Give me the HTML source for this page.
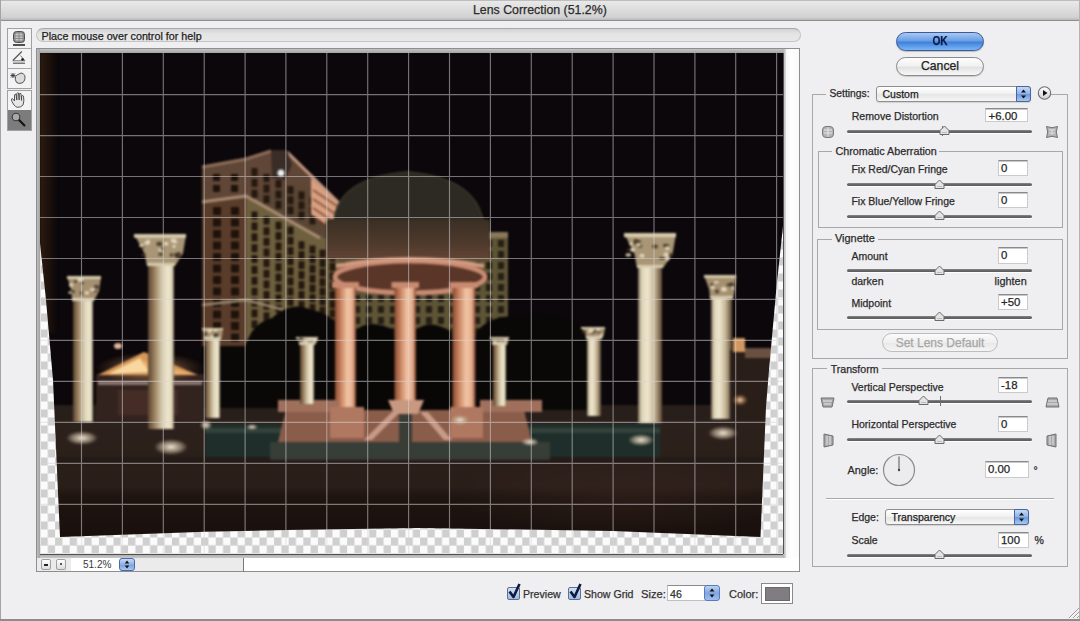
<!DOCTYPE html>
<html><head><meta charset="utf-8">
<style>
*{box-sizing:border-box}
html,body{margin:0;padding:0}
body{width:1080px;height:621px;overflow:hidden;position:relative;background:#efeef0;font-family:"Liberation Sans",sans-serif;color:#262626}
.a{position:absolute}
.t{position:absolute;white-space:nowrap;font-size:10.5px;line-height:12px;-webkit-text-stroke:0.25px currentColor}
#title{left:0;top:0;width:1080px;height:21px;background:linear-gradient(#e9e9e9,#dedede 40%,#d2d2d2 85%,#b9b9b9);border-top:1px solid #bdbdbd;border-bottom:1px solid #8e8e8e}
.grp{position:absolute;border:1px solid #a9a9ab;border-radius:1px}
.lab{position:absolute;background:#efeef0;padding:0 3px;font-size:10.5px;line-height:12px;white-space:nowrap}
.fld{position:absolute;background:#fff;border:1px solid #b8b8b8;border-top-color:#8c8c8c;box-shadow:inset 0 1px 1px rgba(0,0,0,.15);font-size:10.5px;line-height:14px;padding-left:3px}
.trk{position:absolute;height:4px;border-radius:2px;background:linear-gradient(#8a8a8a,#5c5c5c);box-shadow:0 1px 0 #fff}
.thumb{position:absolute;width:9px;height:9px}
</style></head><body>
<div id="title" class="a"></div>
<div class="t" style="left:473px;top:2.8px;font-size:12.35px;line-height:14px;color:#2a2a2a">Lens Correction (51.2%)</div>
<!-- left toolbar -->
<div class="a" style="left:7px;top:28px;width:25px;height:61px;border:1px solid #a0a0a0;background:#f3f3f3"></div>
<div class="a" style="left:8px;top:48px;width:23px;height:1px;background:#a8a8a8"></div>
<div class="a" style="left:8px;top:68px;width:23px;height:1px;background:#a8a8a8"></div>
<div class="a" style="left:7px;top:90px;width:25px;height:41px;border:1px solid #a0a0a0;background:#f3f3f3"></div>
<div class="a" style="left:8px;top:110px;width:23px;height:20px;background:#7c7c7c"></div>
<svg class="a" style="left:0;top:0" width="40" height="135" viewBox="0 0 40 135">
 <rect x="13.5" y="31.5" width="11" height="11" rx="3" fill="#8e8e8e" stroke="#505050"/>
 <rect x="15.5" y="33.5" width="7" height="7" rx="1.5" fill="#c8c8c8"/>
 <path d="M15 36h8M15 38.5h8M19 33v9" stroke="#7a7a7a" stroke-width="0.8"/>
 <rect x="13" y="44" width="12" height="2" fill="#505050"/>
 <path d="M12.8 60.5L21.8 51.5" stroke="#555" stroke-width="1.2"/>
 <path d="M12.8 60.8H25L20.5 55.5" fill="none" stroke="#666" stroke-width="0.9"/>
 <circle cx="22.5" cy="59.5" r="1.3" fill="#111"/>
 <rect x="13" y="62.5" width="12" height="1.5" fill="#7a7a7a"/>
 <path d="M16.5 82.5Q14.5 79 15.5 76.5Q17 74.5 19 74Q21 72.3 23 73.5Q25.5 75 25 78.5Q24.5 82 22 83Q19 84 16.5 82.5z" fill="#dcdcdc" stroke="#555" stroke-width="1"/>
 <path d="M10.5 75.5h5M13 73v5M11 73.5l4 4M15 73.5l-4 4" stroke="#333" stroke-width="0.9"/>
 <path d="M14 105Q11 101 11.5 99Q12.5 98 13.5 99.5L14.5 101V95Q15 93.8 16 94.2L16.8 100V93.5Q17.5 92.2 18.5 93L19.2 100V94Q20 92.8 21 93.6L21.6 100.5V96Q22.5 95 23.5 96Q24.5 101 23 105Q21 107.5 17.5 107.3Q15.5 107 14 105z" fill="#e6e6e6" stroke="#444" stroke-width="0.9"/>
 <circle cx="16" cy="117" r="3.8" fill="#a8a8a8" stroke="#3a3a3a" stroke-width="1.1"/>
 <path d="M18.8 119.8L25 126" stroke="#111" stroke-width="2"/>
</svg>
<!-- help bar -->
<div class="a" style="left:36px;top:28px;width:765px;height:14px;border-radius:7px;background:linear-gradient(#d2d2d2,#e4e4e4 40%,#e8e8e8);border:1px solid #c4c4c4;border-top-color:#a8a8a8"></div>
<div class="t" style="left:41.5px;top:30px;font-size:10.75px;line-height:12px;color:#1e1e1e">Place mouse over control for help</div>
<!-- preview frame -->
<div class="a" style="left:36px;top:48px;width:764px;height:524px;border:1px solid #8e8e8e;background:#fff"></div>
<div class="a" style="left:37px;top:49px;width:746px;height:4px;background:linear-gradient(#c4c4c4,#a4a4a4)"></div>
<div class="a" style="left:37px;top:49px;width:3px;height:509px;background:linear-gradient(90deg,#bdbdbd,#a2a2a2)"></div>
<div class="a" style="left:40px;top:554px;width:744px;height:4px;background:linear-gradient(#a8a8a8,#c8c8c8)"></div>
<div class="a" style="left:783px;top:49px;width:3px;height:509px;background:linear-gradient(90deg,#b0b0b0,#dcdcdc)"></div>
<div class="a" style="left:40px;top:553.5px;width:743px;height:1px;background:#505050"></div>
<div class="a" style="left:782.5px;top:53px;width:1px;height:501px;background:#505050"></div>
<div class="a" style="left:786px;top:49px;width:13px;height:509px;background:linear-gradient(90deg,#f4f4f4,#fff 40%,#fafafa)"></div>
<!-- zoom bar -->
<div class="a" style="left:37px;top:558px;width:206px;height:13px;background:#ebebeb"></div>
<div class="a" style="left:242.5px;top:558px;width:1px;height:14px;background:#7a7a7a"></div>
<div class="a" style="left:41px;top:559px;width:10px;height:11px;border:1px solid #a0a0a0;border-radius:2px;background:linear-gradient(#fff,#dcdcdc)"></div>
<div class="a" style="left:44px;top:564px;width:4px;height:1.6px;background:#222"></div>
<div class="a" style="left:56px;top:559px;width:10px;height:11px;border:1px solid #a0a0a0;border-radius:2px;background:linear-gradient(#fff,#dcdcdc)"></div>
<div class="a" style="left:60px;top:563px;width:2px;height:2px;border-radius:1px;background:#222"></div>
<div class="a" style="left:71px;top:558px;width:49px;height:13px;background:#fff"></div>
<div class="t" style="left:83px;top:559px;font-size:10px;line-height:12px;color:#3a3a3a;-webkit-text-stroke:0">51.2%</div>
<div class="a" style="left:119px;top:558px;width:16px;height:13px;border-radius:3px;border:1px solid #4a6aa5;background:linear-gradient(#c8dbf6,#8eb0e4 50%,#7aa2de 55%,#aac8f2)"></div>
<svg class="a" style="left:119px;top:558px" width="16" height="13"><path d="M5.8 5.5l2.2-3 2.2 3zM5.8 7.5l2.2 3 2.2-3z" fill="#111"/></svg>
<!-- bottom bar -->
<div class="a" style="left:507px;top:587px;width:13px;height:13px;border:1px solid #5f6f90;border-radius:2px;background:linear-gradient(#d4e0f4,#a0bce4)"></div>
<svg class="a" style="left:505px;top:580px" width="20" height="20"><path d="M4.5 11.5l4 5.5 6-13" fill="none" stroke="#0d1a40" stroke-width="2.6" stroke-linejoin="round"/></svg>
<div class="t" style="left:523px;top:588px;font-size:10.6px;color:#333">Preview</div>
<div class="a" style="left:568px;top:587px;width:13px;height:13px;border:1px solid #5f6f90;border-radius:2px;background:linear-gradient(#d4e0f4,#a0bce4)"></div>
<svg class="a" style="left:566px;top:580px" width="20" height="20"><path d="M4.5 11.5l4 5.5 6-13" fill="none" stroke="#0d1a40" stroke-width="2.6" stroke-linejoin="round"/></svg>
<div class="t" style="left:584px;top:588px;font-size:10.6px;color:#333">Show Grid</div>
<div class="t" style="left:641px;top:588px;font-size:11.2px;color:#333">Size:</div>
<div class="a" style="left:667px;top:585px;width:40px;height:16px;background:#fff;border:1px solid #c0c0c0;border-top-color:#8a8a8a"></div>
<div class="t" style="left:670px;top:588px;font-size:10.6px;color:#333">46</div>
<div class="a" style="left:704px;top:585px;width:16px;height:16px;border-radius:3px;border:1px solid #5a7ab5;background:linear-gradient(#bcd3f5,#7fa6e0 50%,#9dbef0)"></div>
<svg class="a" style="left:704px;top:585px" width="16" height="16"><path d="M5.5 6.5l2.5-3 2.5 3zM5.5 9.5l2.5 3 2.5-3z" fill="#111"/></svg>
<div class="t" style="left:729px;top:588px;font-size:11px;color:#333">Color:</div>
<div class="a" style="left:761px;top:583px;width:32px;height:21px;border:1px solid #8a8a8a;background:#fff"></div>
<div class="a" style="left:765px;top:587px;width:25px;height:14px;background:#807c82;border:1px solid #6a686c"></div>
<svg class="a" style="left:0;top:0" width="1080" height="621" viewBox="0 0 1080 621">
<defs>
 <clipPath id="imgclip"><rect x="40" y="53" width="743" height="501"/></clipPath>
 <pattern id="chk" x="40.5" y="553.5" width="14.6" height="16" patternUnits="userSpaceOnUse">
  <rect width="14.6" height="16" fill="#fbfbfb"/>
  <rect width="7.3" height="8" fill="#cfcfcf"/><rect x="7.3" y="8" width="7.3" height="8" fill="#cfcfcf"/>
 </pattern>
 <linearGradient id="colc" x1="0" x2="1" y1="0" y2="0">
  <stop offset="0" stop-color="#5a4430"/><stop offset="0.25" stop-color="#9a8060"/><stop offset="0.5" stop-color="#d0c4a4"/><stop offset="0.75" stop-color="#eee6ce"/><stop offset="0.92" stop-color="#e0d8bc"/><stop offset="1" stop-color="#7a6a56"/>
 </linearGradient>
 <linearGradient id="colr" x1="0" x2="1" y1="0" y2="0">
  <stop offset="0" stop-color="#7a6a56"/><stop offset="0.15" stop-color="#ddd4b8"/><stop offset="0.4" stop-color="#eee6ce"/><stop offset="0.7" stop-color="#c4b494"/><stop offset="1" stop-color="#5a4634"/>
 </linearGradient>
 <linearGradient id="colp" x1="0" x2="1" y1="0" y2="0">
  <stop offset="0" stop-color="#8a4a30"/><stop offset="0.3" stop-color="#cc8866"/><stop offset="0.6" stop-color="#f2c6a6"/><stop offset="0.85" stop-color="#e4aa8a"/><stop offset="1" stop-color="#7a4430"/>
 </linearGradient>
 <linearGradient id="drum" x1="0" x2="0" y1="0" y2="1">
  <stop offset="0" stop-color="#3a2e24"/><stop offset="0.6" stop-color="#4e3a2c"/><stop offset="1" stop-color="#624434"/>
 </linearGradient>
 <linearGradient id="ground" x1="0" x2="0" y1="0" y2="1">
  <stop offset="0" stop-color="#2e221e"/><stop offset="0.55" stop-color="#2a1e18"/><stop offset="0.62" stop-color="#1e1410"/><stop offset="1" stop-color="#170e0c"/>
 </linearGradient>
 <radialGradient id="gnd2" cx="0.5" cy="0.5" r="0.5"><stop offset="0" stop-color="#3a2620" stop-opacity="0.45"/><stop offset="1" stop-color="#3e2a22" stop-opacity="0"/></radialGradient>
 <linearGradient id="lband" x1="0" x2="1" y1="0" y2="0">
  <stop offset="0" stop-color="#2e1c10"/><stop offset="1" stop-color="#2e1c10" stop-opacity="0"/>
 </linearGradient>
 <radialGradient id="glow" cx="0.5" cy="0.5" r="0.5"><stop offset="0" stop-color="#f4ead8"/><stop offset="0.6" stop-color="#c8b8a0" stop-opacity="0.6"/><stop offset="1" stop-color="#c8b8a0" stop-opacity="0"/></radialGradient>
 <radialGradient id="glowO" cx="0.5" cy="0.5" r="0.5"><stop offset="0" stop-color="#ffe0b0"/><stop offset="1" stop-color="#d08040" stop-opacity="0"/></radialGradient>
 <filter id="soft" color-interpolation-filters="sRGB" x="-5%" y="-5%" width="110%" height="110%"><feGaussianBlur stdDeviation="0.8"/></filter>
</defs>
<g clip-path="url(#imgclip)">
 <rect x="40" y="53" width="743" height="501" fill="#0b070a"/>
 <g filter="url(#soft)">
 <rect x="40" y="53" width="18" height="280" fill="url(#lband)"/>
<polygon points="202,167 246,159 271,151 287,151 339,203 339,348 202,348" fill="#5a4634"/>
<polygon points="246,196 339,246 339,348 246,348" fill="#6e603e"/>
<polygon points="202,202 246,196 246,348 202,348" fill="#5a3c2a"/>
<polygon points="202,167 246,159 271,151 287,151 320,185 246,196 202,202" fill="#604636"/>
<rect x="213" y="207.0" width="8" height="8" fill="#1e120a"/>
<rect x="231" y="207.0" width="8" height="8" fill="#1e120a"/>
<rect x="213" y="218.5" width="8" height="8" fill="#1e120a"/>
<rect x="231" y="218.5" width="8" height="8" fill="#1e120a"/>
<rect x="213" y="230.0" width="8" height="8" fill="#1e120a"/>
<rect x="231" y="230.0" width="8" height="8" fill="#1e120a"/>
<rect x="213" y="241.5" width="8" height="8" fill="#1e120a"/>
<rect x="231" y="241.5" width="8" height="8" fill="#1e120a"/>
<rect x="213" y="253.0" width="8" height="8" fill="#1e120a"/>
<rect x="231" y="253.0" width="8" height="8" fill="#1e120a"/>
<rect x="213" y="264.5" width="8" height="8" fill="#1e120a"/>
<rect x="231" y="264.5" width="8" height="8" fill="#1e120a"/>
<rect x="213" y="276.0" width="8" height="8" fill="#1e120a"/>
<rect x="231" y="276.0" width="8" height="8" fill="#1e120a"/>
<rect x="213" y="287.5" width="8" height="8" fill="#1e120a"/>
<rect x="231" y="287.5" width="8" height="8" fill="#1e120a"/>
<rect x="213" y="299.0" width="8" height="8" fill="#1e120a"/>
<rect x="231" y="299.0" width="8" height="8" fill="#1e120a"/>
<rect x="213" y="310.5" width="8" height="8" fill="#1e120a"/>
<rect x="231" y="310.5" width="8" height="8" fill="#1e120a"/>
<rect x="213" y="322.0" width="8" height="8" fill="#1e120a"/>
<rect x="231" y="322.0" width="8" height="8" fill="#1e120a"/>
<rect x="213" y="333.5" width="8" height="8" fill="#1e120a"/>
<rect x="231" y="333.5" width="8" height="8" fill="#1e120a"/>
<rect x="213" y="174" width="7" height="7" fill="#1e120a"/>
<rect x="213" y="185" width="7" height="7" fill="#1e120a"/>
<rect x="231" y="174" width="7" height="7" fill="#1e120a"/>
<rect x="231" y="185" width="7" height="7" fill="#1e120a"/>
<rect x="251.5" y="168.0" width="6" height="8" fill="#24180f"/>
<rect x="263.5" y="174.0" width="6" height="8" fill="#24180f"/>
<rect x="275.5" y="180.0" width="6" height="8" fill="#24180f"/>
<rect x="287.5" y="186.0" width="6" height="8" fill="#24180f"/>
<rect x="298.5" y="191.5" width="6" height="8" fill="#24180f"/>
<rect x="309.5" y="197.0" width="6" height="8" fill="#24180f"/>
<rect x="251.5" y="178.9" width="6" height="8" fill="#24180f"/>
<rect x="263.5" y="184.6" width="6" height="8" fill="#24180f"/>
<rect x="275.5" y="190.4" width="6" height="8" fill="#24180f"/>
<rect x="287.5" y="196.2" width="6" height="8" fill="#24180f"/>
<rect x="298.5" y="201.4" width="6" height="8" fill="#24180f"/>
<rect x="309.5" y="206.7" width="6" height="8" fill="#24180f"/>
<rect x="251.5" y="189.8" width="6" height="8" fill="#24180f"/>
<rect x="263.5" y="195.3" width="6" height="8" fill="#24180f"/>
<rect x="275.5" y="200.8" width="6" height="8" fill="#24180f"/>
<rect x="287.5" y="206.3" width="6" height="8" fill="#24180f"/>
<rect x="298.5" y="211.4" width="6" height="8" fill="#24180f"/>
<rect x="309.5" y="216.4" width="6" height="8" fill="#24180f"/>
<rect x="251.5" y="211.5" width="6" height="8" fill="#24180f"/>
<rect x="263.5" y="216.6" width="6" height="8" fill="#24180f"/>
<rect x="275.5" y="221.6" width="6" height="8" fill="#24180f"/>
<rect x="287.5" y="226.6" width="6" height="8" fill="#24180f"/>
<rect x="251.5" y="222.4" width="6" height="8" fill="#24180f"/>
<rect x="263.5" y="227.2" width="6" height="8" fill="#24180f"/>
<rect x="275.5" y="232.0" width="6" height="8" fill="#24180f"/>
<rect x="287.5" y="236.8" width="6" height="8" fill="#24180f"/>
<rect x="298.5" y="241.2" width="6" height="8" fill="#24180f"/>
<rect x="309.5" y="245.6" width="6" height="8" fill="#24180f"/>
<rect x="319.5" y="249.6" width="6" height="8" fill="#24180f"/>
<rect x="329.5" y="253.6" width="6" height="8" fill="#24180f"/>
<rect x="251.5" y="233.3" width="6" height="8" fill="#24180f"/>
<rect x="263.5" y="237.8" width="6" height="8" fill="#24180f"/>
<rect x="275.5" y="242.4" width="6" height="8" fill="#24180f"/>
<rect x="287.5" y="247.0" width="6" height="8" fill="#24180f"/>
<rect x="298.5" y="251.1" width="6" height="8" fill="#24180f"/>
<rect x="309.5" y="255.3" width="6" height="8" fill="#24180f"/>
<rect x="319.5" y="259.1" width="6" height="8" fill="#24180f"/>
<rect x="329.5" y="262.9" width="6" height="8" fill="#24180f"/>
<rect x="251.5" y="244.2" width="6" height="8" fill="#24180f"/>
<rect x="263.5" y="248.5" width="6" height="8" fill="#24180f"/>
<rect x="275.5" y="252.8" width="6" height="8" fill="#24180f"/>
<rect x="287.5" y="257.1" width="6" height="8" fill="#24180f"/>
<rect x="298.5" y="261.1" width="6" height="8" fill="#24180f"/>
<rect x="309.5" y="265.0" width="6" height="8" fill="#24180f"/>
<rect x="319.5" y="268.6" width="6" height="8" fill="#24180f"/>
<rect x="329.5" y="272.2" width="6" height="8" fill="#24180f"/>
<rect x="251.5" y="255.0" width="6" height="8" fill="#24180f"/>
<rect x="263.5" y="259.1" width="6" height="8" fill="#24180f"/>
<rect x="275.5" y="263.2" width="6" height="8" fill="#24180f"/>
<rect x="287.5" y="267.3" width="6" height="8" fill="#24180f"/>
<rect x="298.5" y="271.0" width="6" height="8" fill="#24180f"/>
<rect x="309.5" y="274.8" width="6" height="8" fill="#24180f"/>
<rect x="319.5" y="278.2" width="6" height="8" fill="#24180f"/>
<rect x="329.5" y="281.6" width="6" height="8" fill="#24180f"/>
<rect x="251.5" y="265.9" width="6" height="8" fill="#24180f"/>
<rect x="263.5" y="269.8" width="6" height="8" fill="#24180f"/>
<rect x="275.5" y="273.6" width="6" height="8" fill="#24180f"/>
<rect x="287.5" y="277.4" width="6" height="8" fill="#24180f"/>
<rect x="298.5" y="281.0" width="6" height="8" fill="#24180f"/>
<rect x="309.5" y="284.5" width="6" height="8" fill="#24180f"/>
<rect x="319.5" y="287.7" width="6" height="8" fill="#24180f"/>
<rect x="329.5" y="290.9" width="6" height="8" fill="#24180f"/>
<rect x="251.5" y="276.8" width="6" height="8" fill="#24180f"/>
<rect x="263.5" y="280.4" width="6" height="8" fill="#24180f"/>
<rect x="275.5" y="284.0" width="6" height="8" fill="#24180f"/>
<rect x="287.5" y="287.6" width="6" height="8" fill="#24180f"/>
<rect x="298.5" y="290.9" width="6" height="8" fill="#24180f"/>
<rect x="309.5" y="294.2" width="6" height="8" fill="#24180f"/>
<rect x="319.5" y="297.2" width="6" height="8" fill="#24180f"/>
<rect x="329.5" y="300.2" width="6" height="8" fill="#24180f"/>
<rect x="251.5" y="287.7" width="6" height="8" fill="#24180f"/>
<rect x="263.5" y="291.0" width="6" height="8" fill="#24180f"/>
<rect x="275.5" y="294.4" width="6" height="8" fill="#24180f"/>
<rect x="287.5" y="297.8" width="6" height="8" fill="#24180f"/>
<rect x="298.5" y="300.8" width="6" height="8" fill="#24180f"/>
<rect x="309.5" y="303.9" width="6" height="8" fill="#24180f"/>
<rect x="319.5" y="306.7" width="6" height="8" fill="#24180f"/>
<rect x="329.5" y="309.5" width="6" height="8" fill="#24180f"/>
<rect x="251.5" y="298.6" width="6" height="8" fill="#24180f"/>
<rect x="263.5" y="301.7" width="6" height="8" fill="#24180f"/>
<rect x="275.5" y="304.8" width="6" height="8" fill="#24180f"/>
<rect x="287.5" y="307.9" width="6" height="8" fill="#24180f"/>
<rect x="298.5" y="310.8" width="6" height="8" fill="#24180f"/>
<rect x="309.5" y="313.6" width="6" height="8" fill="#24180f"/>
<rect x="319.5" y="316.2" width="6" height="8" fill="#24180f"/>
<rect x="329.5" y="318.8" width="6" height="8" fill="#24180f"/>
<rect x="251.5" y="309.4" width="6" height="8" fill="#24180f"/>
<rect x="263.5" y="312.3" width="6" height="8" fill="#24180f"/>
<rect x="275.5" y="315.2" width="6" height="8" fill="#24180f"/>
<rect x="287.5" y="318.1" width="6" height="8" fill="#24180f"/>
<rect x="298.5" y="320.7" width="6" height="8" fill="#24180f"/>
<rect x="309.5" y="323.4" width="6" height="8" fill="#24180f"/>
<rect x="319.5" y="325.8" width="6" height="8" fill="#24180f"/>
<rect x="329.5" y="328.2" width="6" height="8" fill="#24180f"/>
<rect x="251.5" y="320.3" width="6" height="8" fill="#24180f"/>
<rect x="263.5" y="323.0" width="6" height="8" fill="#24180f"/>
<rect x="275.5" y="325.6" width="6" height="8" fill="#24180f"/>
<rect x="287.5" y="328.2" width="6" height="8" fill="#24180f"/>
<rect x="298.5" y="330.7" width="6" height="8" fill="#24180f"/>
<rect x="309.5" y="333.1" width="6" height="8" fill="#24180f"/>
<rect x="319.5" y="335.3" width="6" height="8" fill="#24180f"/>
<rect x="329.5" y="337.5" width="6" height="8" fill="#24180f"/>
<rect x="251.5" y="331.2" width="6" height="8" fill="#24180f"/>
<rect x="263.5" y="333.6" width="6" height="8" fill="#24180f"/>
<rect x="275.5" y="336.0" width="6" height="8" fill="#24180f"/>
<rect x="287.5" y="338.4" width="6" height="8" fill="#24180f"/>
<polygon points="311,178 339,203 337,232 311,214" fill="#d8a080"/>
<path d="M313 190l24 16" stroke="#6a3a28" stroke-width="2" opacity="0.7"/>
<path d="M313 199l24 16" stroke="#6a3a28" stroke-width="2" opacity="0.7"/>
<path d="M313 208l24 16" stroke="#6a3a28" stroke-width="2" opacity="0.7"/>
<path d="M313 217l24 16" stroke="#6a3a28" stroke-width="2" opacity="0.7"/>
<polyline points="202,202 246,196 320,238" fill="none" stroke="#a88c74" stroke-width="3"/>
<polyline points="202,167 246,159 271,151" fill="none" stroke="#8e6e5a" stroke-width="3"/>
<polyline points="287,152 339,203" fill="none" stroke="#c89c84" stroke-width="3"/>
<polygon points="271,150 287,150 292,165 285,180 272,178" fill="#3a2c26"/>
<polyline points="202,305 246,300 330,322" fill="none" stroke="#9a8a70" stroke-width="2.5"/>
<circle cx="281" cy="173" r="3.5" fill="#e8f0f0"/>
<polygon points="338,232 486,232 508,236 508,336 338,336" fill="#5e5436"/>
<rect x="342" y="240" width="6" height="7" fill="#241e14"/>
<rect x="354" y="240" width="6" height="7" fill="#241e14"/>
<rect x="366" y="240" width="6" height="7" fill="#241e14"/>
<rect x="378" y="240" width="6" height="7" fill="#241e14"/>
<rect x="390" y="240" width="6" height="7" fill="#241e14"/>
<rect x="402" y="240" width="6" height="7" fill="#241e14"/>
<rect x="414" y="240" width="6" height="7" fill="#241e14"/>
<rect x="426" y="240" width="6" height="7" fill="#241e14"/>
<rect x="438" y="240" width="6" height="7" fill="#241e14"/>
<rect x="450" y="240" width="6" height="7" fill="#241e14"/>
<rect x="462" y="240" width="6" height="7" fill="#241e14"/>
<rect x="474" y="240" width="6" height="7" fill="#241e14"/>
<rect x="486" y="240" width="6" height="7" fill="#241e14"/>
<rect x="498" y="240" width="6" height="7" fill="#241e14"/>
<rect x="342" y="251" width="6" height="7" fill="#241e14"/>
<rect x="354" y="251" width="6" height="7" fill="#241e14"/>
<rect x="366" y="251" width="6" height="7" fill="#241e14"/>
<rect x="378" y="251" width="6" height="7" fill="#241e14"/>
<rect x="390" y="251" width="6" height="7" fill="#241e14"/>
<rect x="402" y="251" width="6" height="7" fill="#241e14"/>
<rect x="414" y="251" width="6" height="7" fill="#241e14"/>
<rect x="426" y="251" width="6" height="7" fill="#241e14"/>
<rect x="438" y="251" width="6" height="7" fill="#241e14"/>
<rect x="450" y="251" width="6" height="7" fill="#241e14"/>
<rect x="462" y="251" width="6" height="7" fill="#241e14"/>
<rect x="474" y="251" width="6" height="7" fill="#241e14"/>
<rect x="486" y="251" width="6" height="7" fill="#241e14"/>
<rect x="498" y="251" width="6" height="7" fill="#241e14"/>
<rect x="342" y="262" width="6" height="7" fill="#241e14"/>
<rect x="354" y="262" width="6" height="7" fill="#241e14"/>
<rect x="366" y="262" width="6" height="7" fill="#241e14"/>
<rect x="378" y="262" width="6" height="7" fill="#241e14"/>
<rect x="390" y="262" width="6" height="7" fill="#241e14"/>
<rect x="402" y="262" width="6" height="7" fill="#241e14"/>
<rect x="414" y="262" width="6" height="7" fill="#241e14"/>
<rect x="426" y="262" width="6" height="7" fill="#241e14"/>
<rect x="438" y="262" width="6" height="7" fill="#241e14"/>
<rect x="450" y="262" width="6" height="7" fill="#241e14"/>
<rect x="462" y="262" width="6" height="7" fill="#241e14"/>
<rect x="474" y="262" width="6" height="7" fill="#241e14"/>
<rect x="486" y="262" width="6" height="7" fill="#241e14"/>
<rect x="498" y="262" width="6" height="7" fill="#241e14"/>
<rect x="342" y="273" width="6" height="7" fill="#241e14"/>
<rect x="354" y="273" width="6" height="7" fill="#241e14"/>
<rect x="366" y="273" width="6" height="7" fill="#241e14"/>
<rect x="378" y="273" width="6" height="7" fill="#241e14"/>
<rect x="390" y="273" width="6" height="7" fill="#241e14"/>
<rect x="402" y="273" width="6" height="7" fill="#241e14"/>
<rect x="414" y="273" width="6" height="7" fill="#241e14"/>
<rect x="426" y="273" width="6" height="7" fill="#241e14"/>
<rect x="438" y="273" width="6" height="7" fill="#241e14"/>
<rect x="450" y="273" width="6" height="7" fill="#241e14"/>
<rect x="462" y="273" width="6" height="7" fill="#241e14"/>
<rect x="474" y="273" width="6" height="7" fill="#241e14"/>
<rect x="486" y="273" width="6" height="7" fill="#241e14"/>
<rect x="498" y="273" width="6" height="7" fill="#241e14"/>
<rect x="342" y="284" width="6" height="7" fill="#241e14"/>
<rect x="354" y="284" width="6" height="7" fill="#241e14"/>
<rect x="366" y="284" width="6" height="7" fill="#241e14"/>
<rect x="378" y="284" width="6" height="7" fill="#241e14"/>
<rect x="390" y="284" width="6" height="7" fill="#241e14"/>
<rect x="402" y="284" width="6" height="7" fill="#241e14"/>
<rect x="414" y="284" width="6" height="7" fill="#241e14"/>
<rect x="426" y="284" width="6" height="7" fill="#241e14"/>
<rect x="438" y="284" width="6" height="7" fill="#241e14"/>
<rect x="450" y="284" width="6" height="7" fill="#241e14"/>
<rect x="462" y="284" width="6" height="7" fill="#241e14"/>
<rect x="474" y="284" width="6" height="7" fill="#241e14"/>
<rect x="486" y="284" width="6" height="7" fill="#241e14"/>
<rect x="498" y="284" width="6" height="7" fill="#241e14"/>
<rect x="342" y="295" width="6" height="7" fill="#241e14"/>
<rect x="354" y="295" width="6" height="7" fill="#241e14"/>
<rect x="366" y="295" width="6" height="7" fill="#241e14"/>
<rect x="378" y="295" width="6" height="7" fill="#241e14"/>
<rect x="390" y="295" width="6" height="7" fill="#241e14"/>
<rect x="402" y="295" width="6" height="7" fill="#241e14"/>
<rect x="414" y="295" width="6" height="7" fill="#241e14"/>
<rect x="426" y="295" width="6" height="7" fill="#241e14"/>
<rect x="438" y="295" width="6" height="7" fill="#241e14"/>
<rect x="450" y="295" width="6" height="7" fill="#241e14"/>
<rect x="462" y="295" width="6" height="7" fill="#241e14"/>
<rect x="474" y="295" width="6" height="7" fill="#241e14"/>
<rect x="486" y="295" width="6" height="7" fill="#241e14"/>
<rect x="498" y="295" width="6" height="7" fill="#241e14"/>
<rect x="342" y="306" width="6" height="7" fill="#241e14"/>
<rect x="354" y="306" width="6" height="7" fill="#241e14"/>
<rect x="366" y="306" width="6" height="7" fill="#241e14"/>
<rect x="378" y="306" width="6" height="7" fill="#241e14"/>
<rect x="390" y="306" width="6" height="7" fill="#241e14"/>
<rect x="402" y="306" width="6" height="7" fill="#241e14"/>
<rect x="414" y="306" width="6" height="7" fill="#241e14"/>
<rect x="426" y="306" width="6" height="7" fill="#241e14"/>
<rect x="438" y="306" width="6" height="7" fill="#241e14"/>
<rect x="450" y="306" width="6" height="7" fill="#241e14"/>
<rect x="462" y="306" width="6" height="7" fill="#241e14"/>
<rect x="474" y="306" width="6" height="7" fill="#241e14"/>
<rect x="486" y="306" width="6" height="7" fill="#241e14"/>
<rect x="498" y="306" width="6" height="7" fill="#241e14"/>
<rect x="342" y="317" width="6" height="7" fill="#241e14"/>
<rect x="354" y="317" width="6" height="7" fill="#241e14"/>
<rect x="366" y="317" width="6" height="7" fill="#241e14"/>
<rect x="378" y="317" width="6" height="7" fill="#241e14"/>
<rect x="390" y="317" width="6" height="7" fill="#241e14"/>
<rect x="402" y="317" width="6" height="7" fill="#241e14"/>
<rect x="414" y="317" width="6" height="7" fill="#241e14"/>
<rect x="426" y="317" width="6" height="7" fill="#241e14"/>
<rect x="438" y="317" width="6" height="7" fill="#241e14"/>
<rect x="450" y="317" width="6" height="7" fill="#241e14"/>
<rect x="462" y="317" width="6" height="7" fill="#241e14"/>
<rect x="474" y="317" width="6" height="7" fill="#241e14"/>
<rect x="486" y="317" width="6" height="7" fill="#241e14"/>
<rect x="498" y="317" width="6" height="7" fill="#241e14"/>
<rect x="342" y="328" width="6" height="7" fill="#241e14"/>
<rect x="354" y="328" width="6" height="7" fill="#241e14"/>
<rect x="366" y="328" width="6" height="7" fill="#241e14"/>
<rect x="378" y="328" width="6" height="7" fill="#241e14"/>
<rect x="390" y="328" width="6" height="7" fill="#241e14"/>
<rect x="402" y="328" width="6" height="7" fill="#241e14"/>
<rect x="414" y="328" width="6" height="7" fill="#241e14"/>
<rect x="426" y="328" width="6" height="7" fill="#241e14"/>
<rect x="438" y="328" width="6" height="7" fill="#241e14"/>
<rect x="450" y="328" width="6" height="7" fill="#241e14"/>
<rect x="462" y="328" width="6" height="7" fill="#241e14"/>
<rect x="474" y="328" width="6" height="7" fill="#241e14"/>
<rect x="486" y="328" width="6" height="7" fill="#241e14"/>
<rect x="498" y="328" width="6" height="7" fill="#241e14"/>
<rect x="484" y="232" width="24" height="6" fill="#8a7858"/>
<rect x="40" y="405" width="743" height="149" fill="url(#ground)"/>
<rect x="40" y="405" width="743" height="15" fill="#281e1a"/>
<rect x="205" y="424" width="455" height="36" fill="#1f2e2a"/>
<rect x="205" y="428" width="455" height="5" fill="#34423c"/>
<rect x="40" y="457" width="743" height="7" fill="#241a16"/>
<ellipse cx="620" cy="495" rx="170" ry="38" fill="url(#gnd2)"/>
<rect x="202" y="346" width="140" height="62" fill="#0a0807"/>
<path d="M244 350 Q252 322 272 318 Q290 300 312 310 Q328 312 338 326 L344 408 L240 408z" fill="#090807"/>
<path d="M356 420 L356 330 Q370 318 394 330 L394 420z" fill="#080706"/>
<path d="M416 420 L416 330 Q430 318 452 332 L452 420z" fill="#080706"/>
<path d="M476 410 L476 332 Q495 312 520 318 Q550 310 580 326 L600 410z" fill="#090807"/>
<path d="M334 224 Q336 178 407 172 Q480 178 484 228z" fill="#2c2a22"/>
<path d="M334 224 Q336 178 407 172 Q480 178 484 228" fill="none" stroke="#3a3228" stroke-width="2"/>
<rect x="326" y="219" width="164" height="40" rx="3" fill="url(#drum)"/>
<ellipse cx="410" cy="277" rx="76" ry="17" fill="#5a3628"/>
<ellipse cx="410" cy="277" rx="75" ry="16" fill="none" stroke="#c88a72" stroke-width="5"/>
<path d="M336 266 Q410 252 484 266" fill="none" stroke="#d49a80" stroke-width="4"/>
<rect x="335" y="284" width="21" height="128" fill="url(#colp)"/>
<rect x="332" y="282" width="27" height="6" fill="#c88a70"/>
<rect x="394.5" y="284" width="21.5" height="116" fill="url(#colp)"/>
<rect x="391.5" y="282" width="27.5" height="6" fill="#c88a70"/>
<rect x="452.5" y="284" width="23" height="128" fill="url(#colp)"/>
<rect x="449.5" y="282" width="29" height="6" fill="#c88a70"/>
<polygon points="286,410 524,410 532,442 278,442" fill="#8a5c4a"/>
<rect x="270" y="442" width="280" height="18" fill="#3c403a" opacity="0.85"/>
<rect x="278" y="400" width="60" height="12" fill="#a0705c"/>
<rect x="480" y="400" width="62" height="12" fill="#a0705c"/>
<rect x="330" y="407" width="34" height="31" fill="#b07860"/>
<rect x="450" y="407" width="33" height="31" fill="#b07860"/>
<rect x="399" y="412" width="13" height="44" fill="#3a3c36"/>
<path d="M388 400 L424 400 L418 414 L394 414z" fill="#c89880"/>
<polygon points="364,440 392,412 400,412 372,440" fill="#c89a88"/>
<polygon points="420,412 428,412 452,440 444,440" fill="#c89a88"/>
<rect x="300" y="344" width="14" height="60" fill="url(#colc)"/>
<path d="M296 337 L318 338 L317.0 341.8 L315 345 L299 345 L299.0 341.8z" fill="#a49070"/>
<rect x="296" y="337" width="22" height="2.0" fill="#d8ccae"/>
<ellipse cx="300.2" cy="342.7" rx="2.1" ry="1.9" fill="#3a2c20" opacity="0.8"/>
<ellipse cx="309.1" cy="342.9" rx="2.1" ry="1.4" fill="#3a2c20" opacity="0.8"/>
<ellipse cx="300.9" cy="338.8" rx="2.6" ry="1.4" fill="#3a2c20" opacity="0.8"/>
<ellipse cx="312.2" cy="342.9" rx="1.5" ry="1.9" fill="#3a2c20" opacity="0.8"/>
<ellipse cx="314.5" cy="340.0" rx="2.6" ry="1.8" fill="#e8dcc0" opacity="0.9"/>
<ellipse cx="309.8" cy="339.1" rx="3.0" ry="1.6" fill="#e8dcc0" opacity="0.9"/>
<ellipse cx="305.7" cy="341.9" rx="2.3" ry="2.0" fill="#e8dcc0" opacity="0.9"/>
<rect x="299" y="342" width="16" height="3" fill="#d8ccb0"/>
<rect x="493" y="344" width="13" height="62" fill="url(#colc)"/>
<path d="M490 337 L509 338 L508.25 341.8 L507 345 L492 345 L492.25 341.8z" fill="#8a7a5c"/>
<rect x="490" y="337" width="19" height="2.0" fill="#d8ccae"/>
<ellipse cx="504.7" cy="340.7" rx="2.2" ry="1.8" fill="#3a2c20" opacity="0.8"/>
<ellipse cx="504.1" cy="341.8" rx="2.9" ry="1.5" fill="#3a2c20" opacity="0.8"/>
<ellipse cx="496.2" cy="342.4" rx="2.0" ry="1.6" fill="#3a2c20" opacity="0.8"/>
<ellipse cx="505.4" cy="340.4" rx="2.2" ry="1.3" fill="#e8dcc0" opacity="0.9"/>
<ellipse cx="495.1" cy="342.0" rx="2.4" ry="1.3" fill="#e8dcc0" opacity="0.9"/>
<ellipse cx="501.5" cy="342.7" rx="2.2" ry="1.6" fill="#e8dcc0" opacity="0.9"/>
<rect x="492" y="342" width="15" height="3" fill="#d8ccb0"/>
<rect x="96" y="374" width="108" height="46" fill="#33231e"/>
<ellipse cx="150" cy="368" rx="55" ry="16" fill="url(#glowO)" opacity="0.6"/>
<polygon points="98,375 144,352 198,375" fill="#d89858"/>
<polygon points="108,374 140,358 152,372" fill="#f8d8a0"/>
<polygon points="150,372 140,360 196,375 170,375" fill="#e8b070" opacity="0.9"/>
<rect x="98" y="381" width="104" height="4" fill="#8a7470"/>
<rect x="118" y="390" width="60" height="25" fill="#4a3028" opacity="0.8"/>
<ellipse cx="118" cy="346" rx="4" ry="3" fill="#e0b898"/>
<rect x="73" y="300" width="20" height="122" fill="url(#colc)"/>
<path d="M67 276 L101 277 L99.0 291.0 L94 301 L72 301 L71.5 291.0z" fill="#a49070"/>
<rect x="67" y="276" width="34" height="3.0" fill="#d8ccae"/>
<ellipse cx="72.1" cy="291.5" rx="3.0" ry="1.6" fill="#3a2c20" opacity="0.8"/>
<ellipse cx="96.5" cy="286.9" rx="2.4" ry="2.1" fill="#3a2c20" opacity="0.8"/>
<ellipse cx="75.7" cy="281.5" rx="1.8" ry="1.2" fill="#3a2c20" opacity="0.8"/>
<ellipse cx="82.3" cy="282.7" rx="1.6" ry="1.5" fill="#3a2c20" opacity="0.8"/>
<ellipse cx="81.2" cy="293.1" rx="1.5" ry="1.8" fill="#3a2c20" opacity="0.8"/>
<ellipse cx="95.4" cy="291.1" rx="1.7" ry="1.4" fill="#3a2c20" opacity="0.8"/>
<ellipse cx="80.4" cy="279.8" rx="3.0" ry="2.0" fill="#e8dcc0" opacity="0.9"/>
<ellipse cx="92.6" cy="289.5" rx="3.0" ry="1.6" fill="#e8dcc0" opacity="0.9"/>
<ellipse cx="71.1" cy="285.1" rx="2.2" ry="2.0" fill="#e8dcc0" opacity="0.9"/>
<ellipse cx="70.1" cy="292.6" rx="2.0" ry="1.2" fill="#e8dcc0" opacity="0.9"/>
<ellipse cx="86.9" cy="292.8" rx="2.4" ry="1.9" fill="#e8dcc0" opacity="0.9"/>
<rect x="72" y="298" width="22" height="3" fill="#d8ccb0"/>
<rect x="148" y="265" width="26" height="164" fill="url(#colc)"/>
<path d="M134 234 L186 235 L183.0 253.2 L175 266 L147 266 L144.5 253.2z" fill="#a89676"/>
<rect x="134" y="234" width="52" height="3.8" fill="#d8ccae"/>
<ellipse cx="159.3" cy="243.9" rx="3.0" ry="2.1" fill="#3a2c20" opacity="0.8"/>
<ellipse cx="171.3" cy="255.1" rx="1.5" ry="2.0" fill="#3a2c20" opacity="0.8"/>
<ellipse cx="142.1" cy="247.2" rx="2.2" ry="1.4" fill="#3a2c20" opacity="0.8"/>
<ellipse cx="162.1" cy="248.4" rx="1.5" ry="1.5" fill="#3a2c20" opacity="0.8"/>
<ellipse cx="160.7" cy="254.3" rx="2.6" ry="1.5" fill="#3a2c20" opacity="0.8"/>
<ellipse cx="178.7" cy="253.5" rx="2.5" ry="1.5" fill="#3a2c20" opacity="0.8"/>
<ellipse cx="177.2" cy="256.6" rx="2.1" ry="1.9" fill="#3a2c20" opacity="0.8"/>
<ellipse cx="179.3" cy="256.6" rx="2.5" ry="1.9" fill="#3a2c20" opacity="0.8"/>
<ellipse cx="143.5" cy="255.1" rx="2.6" ry="1.7" fill="#3a2c20" opacity="0.8"/>
<ellipse cx="176.4" cy="254.8" rx="2.9" ry="1.9" fill="#3a2c20" opacity="0.8"/>
<ellipse cx="160.1" cy="249.8" rx="1.6" ry="1.6" fill="#e8dcc0" opacity="0.9"/>
<ellipse cx="148.3" cy="241.4" rx="1.6" ry="2.0" fill="#e8dcc0" opacity="0.9"/>
<ellipse cx="141.5" cy="245.6" rx="2.4" ry="1.5" fill="#e8dcc0" opacity="0.9"/>
<ellipse cx="166.0" cy="243.7" rx="2.5" ry="1.9" fill="#e8dcc0" opacity="0.9"/>
<ellipse cx="174.1" cy="246.4" rx="1.8" ry="1.6" fill="#e8dcc0" opacity="0.9"/>
<ellipse cx="173.5" cy="240.4" rx="2.9" ry="2.0" fill="#e8dcc0" opacity="0.9"/>
<ellipse cx="175.0" cy="242.0" rx="2.6" ry="1.3" fill="#e8dcc0" opacity="0.9"/>
<ellipse cx="147.2" cy="242.7" rx="2.9" ry="2.0" fill="#e8dcc0" opacity="0.9"/>
<rect x="147" y="263" width="28" height="3" fill="#d8ccb0"/>
<rect x="205" y="339" width="15" height="79" fill="url(#colc)"/>
<path d="M202 328 L223 329 L222.25 335.2 L221 340 L204 340 L204.25 335.2z" fill="#a49070"/>
<rect x="202" y="328" width="21" height="2.0" fill="#d8ccae"/>
<ellipse cx="216.5" cy="334.7" rx="2.1" ry="1.4" fill="#3a2c20" opacity="0.8"/>
<ellipse cx="215.2" cy="336.8" rx="2.1" ry="2.1" fill="#3a2c20" opacity="0.8"/>
<ellipse cx="205.5" cy="333.9" rx="1.8" ry="1.7" fill="#3a2c20" opacity="0.8"/>
<ellipse cx="214.2" cy="336.0" rx="2.3" ry="2.1" fill="#3a2c20" opacity="0.8"/>
<ellipse cx="209.9" cy="330.7" rx="2.2" ry="1.9" fill="#e8dcc0" opacity="0.9"/>
<ellipse cx="215.6" cy="330.1" rx="1.9" ry="1.5" fill="#e8dcc0" opacity="0.9"/>
<ellipse cx="212.1" cy="336.0" rx="1.9" ry="1.2" fill="#e8dcc0" opacity="0.9"/>
<rect x="204" y="337" width="17" height="3" fill="#d8ccb0"/>
<rect x="638" y="267" width="24" height="156" fill="url(#colr)"/>
<path d="M624 233 L676 234 L672.5 254.0 L663 268 L637 268 L634.5 254.0z" fill="#a89676"/>
<rect x="624" y="233" width="52" height="4.2" fill="#d8ccae"/>
<ellipse cx="635.7" cy="240.6" rx="1.8" ry="1.8" fill="#3a2c20" opacity="0.8"/>
<ellipse cx="639.7" cy="246.0" rx="2.4" ry="1.9" fill="#3a2c20" opacity="0.8"/>
<ellipse cx="667.3" cy="246.1" rx="2.4" ry="1.9" fill="#3a2c20" opacity="0.8"/>
<ellipse cx="670.8" cy="255.0" rx="2.7" ry="1.9" fill="#3a2c20" opacity="0.8"/>
<ellipse cx="629.3" cy="249.7" rx="2.9" ry="1.8" fill="#3a2c20" opacity="0.8"/>
<ellipse cx="665.3" cy="245.6" rx="2.4" ry="1.8" fill="#3a2c20" opacity="0.8"/>
<ellipse cx="638.3" cy="241.4" rx="2.9" ry="1.4" fill="#3a2c20" opacity="0.8"/>
<ellipse cx="655.1" cy="246.5" rx="2.9" ry="2.1" fill="#3a2c20" opacity="0.8"/>
<ellipse cx="661.9" cy="258.3" rx="3.0" ry="1.2" fill="#3a2c20" opacity="0.8"/>
<ellipse cx="634.6" cy="243.1" rx="1.9" ry="1.7" fill="#3a2c20" opacity="0.8"/>
<ellipse cx="638.7" cy="245.1" rx="1.9" ry="1.6" fill="#e8dcc0" opacity="0.9"/>
<ellipse cx="628.3" cy="254.9" rx="2.9" ry="1.6" fill="#e8dcc0" opacity="0.9"/>
<ellipse cx="667.5" cy="258.7" rx="2.2" ry="2.1" fill="#e8dcc0" opacity="0.9"/>
<ellipse cx="667.3" cy="248.1" rx="2.2" ry="2.2" fill="#e8dcc0" opacity="0.9"/>
<ellipse cx="642.0" cy="255.8" rx="2.6" ry="2.1" fill="#e8dcc0" opacity="0.9"/>
<ellipse cx="632.6" cy="249.8" rx="2.5" ry="2.1" fill="#e8dcc0" opacity="0.9"/>
<ellipse cx="666.2" cy="254.4" rx="2.8" ry="2.0" fill="#e8dcc0" opacity="0.9"/>
<ellipse cx="631.3" cy="243.9" rx="2.3" ry="1.4" fill="#e8dcc0" opacity="0.9"/>
<rect x="637" y="265" width="26" height="3" fill="#d8ccb0"/>
<rect x="711" y="298" width="21" height="121" fill="url(#colr)"/>
<path d="M704 275 L736 276 L735.0 289.4 L733 299 L710 299 L709.25 289.4z" fill="#a49070"/>
<rect x="704" y="275" width="32" height="2.9" fill="#d8ccae"/>
<ellipse cx="728.9" cy="284.7" rx="2.6" ry="1.5" fill="#3a2c20" opacity="0.8"/>
<ellipse cx="717.0" cy="291.5" rx="2.0" ry="2.1" fill="#3a2c20" opacity="0.8"/>
<ellipse cx="711.6" cy="284.6" rx="1.6" ry="1.4" fill="#3a2c20" opacity="0.8"/>
<ellipse cx="724.1" cy="288.2" rx="2.0" ry="1.4" fill="#3a2c20" opacity="0.8"/>
<ellipse cx="731.8" cy="284.4" rx="2.4" ry="2.1" fill="#3a2c20" opacity="0.8"/>
<ellipse cx="732.7" cy="286.5" rx="2.4" ry="1.6" fill="#3a2c20" opacity="0.8"/>
<ellipse cx="716.3" cy="282.2" rx="2.5" ry="1.3" fill="#e8dcc0" opacity="0.9"/>
<ellipse cx="732.8" cy="287.6" rx="1.5" ry="1.9" fill="#e8dcc0" opacity="0.9"/>
<ellipse cx="723.6" cy="288.3" rx="2.0" ry="1.7" fill="#e8dcc0" opacity="0.9"/>
<ellipse cx="712.7" cy="287.5" rx="2.0" ry="1.9" fill="#e8dcc0" opacity="0.9"/>
<ellipse cx="724.0" cy="289.4" rx="3.0" ry="2.1" fill="#e8dcc0" opacity="0.9"/>
<rect x="710" y="296" width="23" height="3" fill="#d8ccb0"/>
<rect x="587" y="338" width="14" height="78" fill="url(#colr)"/>
<path d="M581 327 L605 328 L604.0 334.2 L602 339 L586 339 L585.5 334.2z" fill="#a49070"/>
<rect x="581" y="327" width="24" height="2.0" fill="#d8ccae"/>
<ellipse cx="596.8" cy="330.6" rx="2.0" ry="1.6" fill="#3a2c20" opacity="0.8"/>
<ellipse cx="584.1" cy="332.1" rx="2.2" ry="1.7" fill="#3a2c20" opacity="0.8"/>
<ellipse cx="598.9" cy="331.4" rx="1.6" ry="1.8" fill="#3a2c20" opacity="0.8"/>
<ellipse cx="592.0" cy="332.3" rx="3.0" ry="1.7" fill="#3a2c20" opacity="0.8"/>
<ellipse cx="598.2" cy="329.8" rx="2.3" ry="1.7" fill="#e8dcc0" opacity="0.9"/>
<ellipse cx="590.3" cy="331.9" rx="2.8" ry="1.4" fill="#e8dcc0" opacity="0.9"/>
<ellipse cx="601.6" cy="335.5" rx="1.5" ry="1.8" fill="#e8dcc0" opacity="0.9"/>
<ellipse cx="591.1" cy="330.4" rx="3.0" ry="1.3" fill="#e8dcc0" opacity="0.9"/>
<rect x="586" y="336" width="16" height="3" fill="#d8ccb0"/>
<rect x="730" y="350" width="53" height="70" fill="#2a1e18"/>
<rect x="733" y="338" width="12" height="14" fill="#e8a868" opacity="0.9"/>
<rect x="745" y="348" width="35" height="10" fill="#6a5040"/>
<ellipse cx="82" cy="438" rx="16" ry="7" fill="url(#glow)"/>
<ellipse cx="171" cy="447" rx="17" ry="8" fill="url(#glow)"/>
<ellipse cx="723" cy="433" rx="15" ry="7" fill="url(#glow)"/>
<ellipse cx="641" cy="440" rx="13" ry="6" fill="url(#glow)"/>
<ellipse cx="460" cy="420" rx="9" ry="5" fill="url(#glow)"/>
<ellipse cx="206" cy="425" rx="6" ry="5" fill="url(#glow)"/>
<ellipse cx="530" cy="442" rx="9" ry="4" fill="url(#glow)"/>
<ellipse cx="252" cy="427" rx="6" ry="3" fill="url(#glow)"/>
<ellipse cx="740" cy="400" rx="8" ry="6" fill="url(#glowO)"/>
</g>
<polygon points="40,243 46,300 53,380 60,537 205,531.7 286,530 420,528 613,531 760.5,537 766,407 769,370 776.5,287 783,226 783,554 40,554" fill="url(#chk)"/>
<path d="M81.5 53V554M122.4 53V554M163.3 53V554M204.2 53V554M245.1 53V554M285.9 53V554M326.8 53V554M367.7 53V554M408.6 53V554M449.5 53V554M490.4 53V554M531.3 53V554M572.2 53V554M613.1 53V554M654.0 53V554M694.9 53V554M735.7 53V554M776.6 53V554M40 94.6H783M40 135.6H783M40 176.5H783M40 217.5H783M40 258.5H783M40 299.4H783M40 340.4H783M40 381.4H783M40 422.4H783M40 463.3H783M40 504.3H783M40 545.3H783" stroke="#d8d4d8" stroke-opacity="0.52" stroke-width="1.15"/>
</g></svg><div class="a" style="left:896px;top:32px;width:88px;height:19px;border-radius:10px;border:1px solid #3a5a9a;background:linear-gradient(#a9c8f2 0%,#6a9fe6 45%,#3f82dc 55%,#7cb6f4 100%);box-shadow:0 1px 1px rgba(0,0,0,.2)"></div>
<div class="t" style="left:896px;top:34.5px;width:88px;text-align:center;font-size:12.4px;font-weight:bold;color:#0c1c4a;transform:scaleX(0.82)">OK</div>
<div class="a" style="left:896px;top:57px;width:88px;height:19px;border-radius:10px;border:1px solid #8a8a8a;background:linear-gradient(#fdfdfd 0%,#f2f2f2 45%,#e2e2e2 55%,#f8f8f8 100%);box-shadow:0 1px 1px rgba(0,0,0,.15)"></div>
<div class="t" style="left:896px;top:60px;width:88px;text-align:center;font-size:12.2px;color:#222">Cancel</div>
<div class="a" style="left:812px;top:94px;width:256px;height:265px;border:1px solid #a8a8aa"></div>
<div class="a" style="left:818px;top:151px;width:245px;height:77px;border:1px solid #a8a8aa"></div>
<div class="a" style="left:817px;top:239px;width:246px;height:91px;border:1px solid #a8a8aa"></div>
<div class="a" style="left:812px;top:368px;width:256px;height:199px;border:1px solid #a8a8aa"></div>
<div class="a" style="left:826px;top:88px;width:224px;height:12px;background:#efeef0"></div>
<div class="a" style="left:832px;top:146px;width:107px;height:12px;background:#efeef0"></div>
<div class="a" style="left:832px;top:234px;width:46px;height:12px;background:#efeef0"></div>
<div class="a" style="left:827px;top:366px;width:55px;height:12px;background:#efeef0"></div>
<div class="t" style="left:829.5px;top:87.9px;font-size:10.3px;color:#2b2b2b;">Settings:</div>
<div class="a" style="left:876px;top:86px;width:155px;height:16px;border-radius:3px;border:1px solid #8e8e8e;background:linear-gradient(#ffffff,#f0f0f0 50%,#e6e6e6 52%,#f6f6f6);box-shadow:0 1px 1px rgba(0,0,0,.12)"></div>
<div class="a" style="left:1016px;top:86px;width:15px;height:16px;border-radius:0 3px 3px 0;border:1px solid #46669e;background:linear-gradient(#c5d9f6,#8fb2e6 50%,#6c98dc 52%,#a9c8f2)"></div>
<svg class="a" style="left:1016px;top:86px" width="15" height="16"><path d="M5 6.5l2.5-3 2.5 3zM5 9.5l2.5 3 2.5-3z" fill="#111"/></svg>
<div class="t" style="left:882.5px;top:88.4px;font-size:10.5px;color:#1e1e1e;">Custom</div>
<svg class="a" style="left:1036px;top:85px" width="17" height="16"><circle cx="8.5" cy="8" r="6.2" fill="url(#cg)" stroke="#6e6e6e" stroke-width="1.1"/><defs><linearGradient id="cg" x1="0" y1="0" x2="0" y2="1"><stop offset="0" stop-color="#fff"/><stop offset="1" stop-color="#d0d0d0"/></linearGradient></defs><path d="M7 5v6l4.5-3z" fill="#111"/></svg>
<div class="t" style="left:851.7px;top:109.8px;font-size:10.58px;color:#2b2b2b;">Remove Distortion</div>
<div class="a" style="left:985px;top:108px;width:43px;height:14px;background:#fff;border:1px solid #cacaca;border-top:1px solid #8a8a8a;box-shadow:inset 0 1px 0 #c8c8c8"></div>
<div class="t" style="left:988.5px;top:110px;font-size:11.4px;color:#262626">+6.00</div>
<div class="a" style="left:847px;top:129.5px;width:185px;height:3px;border-radius:1.5px;background:linear-gradient(#8a8a8a,#585858 70%,#6a6a6a);box-shadow:0 1px 0 rgba(255,255,255,.9)"></div>
<div class="a" style="left:942px;top:126px;width:1px;height:10px;background:#6e6e6e"></div>
<svg class="a" style="left:939.0px;top:125px" width="11" height="11"><path d="M5.5 1L10 5.5V9.5H1V5.5z" fill="#e4e4e4" stroke="#6a6a6a" stroke-width="1"/><path d="M3 7.5h5" stroke="#bcbcbc"/></svg>
<svg class="a" style="left:821px;top:125px" width="14" height="14"><rect x="1.5" y="1.5" width="11" height="11" rx="3.5" fill="#b4b4b4" stroke="#7a7a7a"/><path d="M3 5h8M3 8h8M7 2.5v9" stroke="#e8e8e8" stroke-width="1"/></svg>
<svg class="a" style="left:1045px;top:125px" width="14" height="14"><path d="M1.5 1.5Q7 4 12.5 1.5Q10 7 12.5 12.5Q7 10 1.5 12.5Q4 7 1.5 1.5z" fill="#b4b4b4" stroke="#6e6e6e"/><path d="M4 5h6M4 8h6M7 4v6" stroke="#e0e0e0"/></svg>
<div class="t" style="left:835.4px;top:145.1px;font-size:10.8px;color:#2b2b2b;">Chromatic Aberration</div>
<div class="t" style="left:851.4px;top:163.0px;font-size:10.5px;color:#2b2b2b;">Fix Red/Cyan Fringe</div>
<div class="a" style="left:998px;top:160px;width:30px;height:16px;background:#fff;border:1px solid #cacaca;border-top:1px solid #8a8a8a;box-shadow:inset 0 1px 0 #c8c8c8"></div>
<div class="t" style="left:1001px;top:162px;font-size:11.4px;color:#262626">0</div>
<div class="a" style="left:847px;top:183.0px;width:185px;height:3px;border-radius:1.5px;background:linear-gradient(#8a8a8a,#585858 70%,#6a6a6a);box-shadow:0 1px 0 rgba(255,255,255,.9)"></div>
<svg class="a" style="left:934.3px;top:178.5px" width="11" height="11"><path d="M5.5 1L10 5.5V9.5H1V5.5z" fill="#e4e4e4" stroke="#6a6a6a" stroke-width="1"/><path d="M3 7.5h5" stroke="#bcbcbc"/></svg>
<div class="t" style="left:851.4px;top:194.9px;font-size:10.5px;color:#2b2b2b;">Fix Blue/Yellow Fringe</div>
<div class="a" style="left:998px;top:192px;width:30px;height:16px;background:#fff;border:1px solid #cacaca;border-top:1px solid #8a8a8a;box-shadow:inset 0 1px 0 #c8c8c8"></div>
<div class="t" style="left:1001px;top:194px;font-size:11.4px;color:#262626">0</div>
<div class="a" style="left:847px;top:214.5px;width:185px;height:3px;border-radius:1.5px;background:linear-gradient(#8a8a8a,#585858 70%,#6a6a6a);box-shadow:0 1px 0 rgba(255,255,255,.9)"></div>
<svg class="a" style="left:934.3px;top:210px" width="11" height="11"><path d="M5.5 1L10 5.5V9.5H1V5.5z" fill="#e4e4e4" stroke="#6a6a6a" stroke-width="1"/><path d="M3 7.5h5" stroke="#bcbcbc"/></svg>
<div class="t" style="left:835px;top:231.5px;font-size:10.95px;color:#2b2b2b;">Vignette</div>
<div class="t" style="left:851.4px;top:249.6px;font-size:10.5px;color:#2b2b2b;">Amount</div>
<div class="a" style="left:998px;top:247px;width:30px;height:17px;background:#fff;border:1px solid #cacaca;border-top:1px solid #8a8a8a;box-shadow:inset 0 1px 0 #c8c8c8"></div>
<div class="t" style="left:1001px;top:249px;font-size:11.4px;color:#262626">0</div>
<div class="a" style="left:847px;top:269.0px;width:185px;height:3px;border-radius:1.5px;background:linear-gradient(#8a8a8a,#585858 70%,#6a6a6a);box-shadow:0 1px 0 rgba(255,255,255,.9)"></div>
<svg class="a" style="left:934.3px;top:264.5px" width="11" height="11"><path d="M5.5 1L10 5.5V9.5H1V5.5z" fill="#e4e4e4" stroke="#6a6a6a" stroke-width="1"/><path d="M3 7.5h5" stroke="#bcbcbc"/></svg>
<div class="t" style="left:851.4px;top:275.4px;font-size:10.5px;color:#2b2b2b;">darken</div>
<div class="t" style="left:994.6px;top:275.3px;font-size:10.9px;color:#2b2b2b;">lighten</div>
<div class="t" style="left:851.4px;top:296.7px;font-size:10.5px;color:#2b2b2b;">Midpoint</div>
<div class="a" style="left:998px;top:294px;width:30px;height:16px;background:#fff;border:1px solid #cacaca;border-top:1px solid #8a8a8a;box-shadow:inset 0 1px 0 #c8c8c8"></div>
<div class="t" style="left:1001px;top:296px;font-size:11.4px;color:#262626">+50</div>
<div class="a" style="left:847px;top:315.8px;width:185px;height:3px;border-radius:1.5px;background:linear-gradient(#8a8a8a,#585858 70%,#6a6a6a);box-shadow:0 1px 0 rgba(255,255,255,.9)"></div>
<svg class="a" style="left:934.3px;top:311.3px" width="11" height="11"><path d="M5.5 1L10 5.5V9.5H1V5.5z" fill="#e4e4e4" stroke="#6a6a6a" stroke-width="1"/><path d="M3 7.5h5" stroke="#bcbcbc"/></svg>
<div class="a" style="left:882px;top:333px;width:116px;height:19px;border-radius:10px;border:1px solid #bdbdbd;background:linear-gradient(#fbfbfb,#efefef 50%,#e8e8e8 52%,#f4f4f4)"></div>
<div class="t" style="left:882px;top:336.5px;width:116px;text-align:center;font-size:12px;color:#a6a6a6">Set Lens Default</div>
<div class="t" style="left:830.7px;top:362.5px;font-size:10.58px;color:#2b2b2b;">Transform</div>
<div class="t" style="left:851.4px;top:380.7px;font-size:10.5px;color:#2b2b2b;">Vertical Perspective</div>
<div class="a" style="left:998px;top:377px;width:30px;height:16px;background:#fff;border:1px solid #cacaca;border-top:1px solid #8a8a8a;box-shadow:inset 0 1px 0 #c8c8c8"></div>
<div class="t" style="left:1001px;top:379px;font-size:11.4px;color:#262626">-18</div>
<div class="a" style="left:847px;top:399.8px;width:185px;height:3px;border-radius:1.5px;background:linear-gradient(#8a8a8a,#585858 70%,#6a6a6a);box-shadow:0 1px 0 rgba(255,255,255,.9)"></div>
<div class="a" style="left:939.5px;top:396.3px;width:1px;height:10px;background:#6e6e6e"></div>
<svg class="a" style="left:918.2px;top:395.3px" width="11" height="11"><path d="M5.5 1L10 5.5V9.5H1V5.5z" fill="#e4e4e4" stroke="#6a6a6a" stroke-width="1"/><path d="M3 7.5h5" stroke="#bcbcbc"/></svg>
<svg class="a" style="left:820px;top:396px" width="15" height="13"><path d="M1 2h13l-2 9H3z" fill="#a8a8a8" stroke="#707070"/><path d="M3 5h9M4 8h7" stroke="#e6e6e6"/></svg>
<svg class="a" style="left:1045px;top:396px" width="15" height="13"><path d="M3 2h9l2 9H1z" fill="#a8a8a8" stroke="#707070"/><path d="M3 5h9M2 8h11" stroke="#e6e6e6"/></svg>
<div class="t" style="left:851.4px;top:418.4px;font-size:10.5px;color:#2b2b2b;">Horizontal Perspective</div>
<div class="a" style="left:998px;top:416px;width:30px;height:16px;background:#fff;border:1px solid #cacaca;border-top:1px solid #8a8a8a;box-shadow:inset 0 1px 0 #c8c8c8"></div>
<div class="t" style="left:1001px;top:418px;font-size:11.4px;color:#262626">0</div>
<div class="a" style="left:847px;top:438.0px;width:185px;height:3px;border-radius:1.5px;background:linear-gradient(#8a8a8a,#585858 70%,#6a6a6a);box-shadow:0 1px 0 rgba(255,255,255,.9)"></div>
<svg class="a" style="left:934.0px;top:433.5px" width="11" height="11"><path d="M5.5 1L10 5.5V9.5H1V5.5z" fill="#e4e4e4" stroke="#6a6a6a" stroke-width="1"/><path d="M3 7.5h5" stroke="#bcbcbc"/></svg>
<svg class="a" style="left:822px;top:432px" width="13" height="16"><path d="M2 2l9 2v9l-9 2z" fill="#a8a8a8" stroke="#707070"/><path d="M5 4v9M8 4v9" stroke="#e6e6e6"/></svg>
<svg class="a" style="left:1045px;top:432px" width="13" height="16"><path d="M11 2l-9 2v9l9 2z" fill="#a8a8a8" stroke="#707070"/><path d="M5 4v9M8 4v9" stroke="#e6e6e6"/></svg>
<div class="t" style="left:847.5px;top:464.2px;font-size:10.9px;color:#2b2b2b;">Angle:</div>
<svg class="a" style="left:881px;top:452px" width="36" height="36"><circle cx="18" cy="18" r="15.5" fill="#ececee" stroke="#8c8c8c" stroke-width="1.2"/><path d="M18 4.5V18" stroke="#555" stroke-width="1"/><circle cx="18" cy="18" r="1.2" fill="#444"/></svg>
<div class="a" style="left:985px;top:461px;width:44px;height:17px;background:#fff;border:1px solid #cacaca;border-top:1px solid #8a8a8a;box-shadow:inset 0 1px 0 #c8c8c8"></div>
<div class="t" style="left:988px;top:463px;font-size:11.4px;color:#262626">0.00</div>
<div class="t" style="left:1033.5px;top:464.4px;font-size:10.5px;color:#2b2b2b;">°</div>
<div class="a" style="left:826px;top:498px;width:228px;height:1px;background:#a8a8a8;box-shadow:0 1px 0 #fff"></div>
<div class="t" style="left:851.4px;top:511.1px;font-size:10.5px;color:#2b2b2b;">Edge:</div>
<div class="a" style="left:885px;top:509px;width:144px;height:16px;border-radius:3px;border:1px solid #8e8e8e;background:linear-gradient(#ffffff,#f0f0f0 50%,#e6e6e6 52%,#f6f6f6);box-shadow:0 1px 1px rgba(0,0,0,.12)"></div>
<div class="a" style="left:1014px;top:509px;width:15px;height:16px;border-radius:0 3px 3px 0;border:1px solid #46669e;background:linear-gradient(#c5d9f6,#8fb2e6 50%,#6c98dc 52%,#a9c8f2)"></div>
<svg class="a" style="left:1014px;top:509px" width="15" height="16"><path d="M5 6.5l2.5-3 2.5 3zM5 9.5l2.5 3 2.5-3z" fill="#111"/></svg>
<div class="t" style="left:891.5px;top:511.4px;font-size:10.5px;color:#1e1e1e;">Transparency</div>
<div class="t" style="left:851.4px;top:534.2px;font-size:10.5px;color:#2b2b2b;">Scale</div>
<div class="a" style="left:998px;top:532px;width:31px;height:16px;background:#fff;border:1px solid #cacaca;border-top:1px solid #8a8a8a;box-shadow:inset 0 1px 0 #c8c8c8"></div>
<div class="t" style="left:1001px;top:534px;font-size:11.4px;color:#262626">100</div>
<div class="t" style="left:1034.5px;top:534.2px;font-size:10.5px;color:#2b2b2b;">%</div>
<div class="a" style="left:847px;top:553.5px;width:185px;height:3px;border-radius:1.5px;background:linear-gradient(#8a8a8a,#585858 70%,#6a6a6a);box-shadow:0 1px 0 rgba(255,255,255,.9)"></div>
<svg class="a" style="left:934.0px;top:549px" width="11" height="11"><path d="M5.5 1L10 5.5V9.5H1V5.5z" fill="#e4e4e4" stroke="#6a6a6a" stroke-width="1"/><path d="M3 7.5h5" stroke="#bcbcbc"/></svg>
<div class="a" style="left:0;top:0;width:1px;height:621px;background:#a4a4a4"></div>
<div class="a" style="left:1079px;top:0;width:1px;height:621px;background:#b4b4b4"></div>
<div class="a" style="left:0;top:619px;width:1080px;height:2px;background:#8c8c8c"></div>
<svg class="a" style="left:1066px;top:606px" width="14" height="13"><path d="M3 12L13 2M7 12l6-6M11 12l2-2" stroke="#9a9a9a" stroke-width="1"/><path d="M4 12L13 3M8 12l5-5" stroke="#fff" stroke-width="0.8"/></svg>

</body></html>
